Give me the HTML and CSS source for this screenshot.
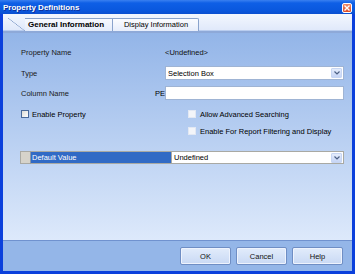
FILE: index.html
```html
<!DOCTYPE html>
<html>
<head>
<meta charset="utf-8">
<link rel="stylesheet" href="styles.css">
</head>
<body>
<div class="window">
  <div class="titlebar">
    <span class="title">Property Definitions</span>
    <span class="close"><svg width="6" height="6" viewBox="0 0 6 6"><path d="M0.5 0.5L5.5 5.5M5.5 0.5L0.5 5.5" stroke="#fff" stroke-width="1.4"/></svg></span>
  </div>
  <div class="frame">
    <div class="tabs">
      <div class="tab active"><span class="slant"></span><span class="tab-body">General Information</span></div>
      <div class="tab plain">Display Information</div>
    </div>
    <div class="panel">
      <div class="row r1"><span class="label">Property Name</span><span class="value">&lt;Undefined&gt;</span></div>
      <div class="row r2"><span class="label">Type</span><div class="select"><span class="sel-text">Selection Box</span><span class="arrow"><svg width="6" height="4" viewBox="0 0 6 4"><path d="M0.5 0.5L3 3L5.5 0.5" fill="none" stroke="#4d6185" stroke-width="1.2"/></svg></span></div></div>
      <div class="row r3"><span class="label short">Column Name</span><span class="prefix">PE</span><div class="input"></div></div>
      <div class="checks">
        <div class="check-left">
          <div class="check"><span class="box"></span><span>Enable Property</span></div>
        </div>
        <div class="check-right">
          <div class="check"><span class="box off"></span><span>Allow Advanced Searching</span></div>
          <div class="check"><span class="box off"></span><span>Enable For Report Filtering and Display</span></div>
        </div>
      </div>
      <div class="grid-row">
        <span class="cell-gray"></span>
        <span class="cell-sel">Default Value</span>
        <div class="select grid-select"><span class="sel-text">Undefined</span><span class="arrow"><svg width="6" height="4" viewBox="0 0 6 4"><path d="M0.5 0.5L3 3L5.5 0.5" fill="none" stroke="#4d6185" stroke-width="1.2"/></svg></span></div>
      </div>
    </div>
    <div class="footer">
      <button class="btn">OK</button>
      <button class="btn">Cancel</button>
      <button class="btn">Help</button>
    </div>
  </div>
</div>
</body>
</html>
```

FILE: styles.css
```css
html, body {
  margin: 0;
  padding: 0;
  background: #ffffff;
}
.window {
  width: 355px;
  height: 274px;
  box-sizing: border-box;
  background: #0b40dc;
  display: flex;
  flex-direction: column;
  font-family: "Liberation Sans", Arial, sans-serif;
  font-size: 7.5px;
  color: #000;
  overflow: hidden;
}
.titlebar {
  height: 14px;
  flex: 0 0 14px;
  background: linear-gradient(#3a80f0 0px, #0e5fe6 3px, #0a58de 10px, #0a4fd0 14px);
  display: flex;
  align-items: center;
  justify-content: space-between;
  padding: 0 3px 0 3px;
}
.title {
  color: #fff;
  font-weight: bold;
  font-size: 8px;
  text-shadow: 1px 1px 0 #0a2f9a;
  line-height: 14px;
  padding-top: 1px;
}
.close {
  width: 10px;
  height: 10px;
  margin-top: 2px;
  box-sizing: border-box;
  border: 1px solid #fff;
  border-radius: 2px;
  background: linear-gradient(#ef8a68, #dc4c28);
  display: flex;
  align-items: center;
  justify-content: center;
}
.close svg { display: block; }
.frame {
  flex: 1;
  margin: 0 3px 3px 3px;
  display: flex;
  flex-direction: column;
  min-height: 0;
}
.tabs {
  height: 17px;
  flex: 0 0 17px;
  background: linear-gradient(#f3f7fe, #dfe8fa);
  border-bottom: 2px solid #8ea9d8;
  box-shadow: inset 0 -1px 0 #b9cdef;
  display: flex;
  align-items: flex-end;
  padding-left: 5px;
}
.tab {
  height: 13px;
  box-sizing: border-box;
  font-size: 7.5px;
  line-height: 12px;
  display: flex;
}
.tab.active {
  font-weight: bold;
  font-size: 8px;
}
.slant {
  width: 17px;
  height: 13px;
  background: linear-gradient(to top right, transparent calc(50% - 0.6px), #8aa3cc 50%, transparent calc(50% + 0.6px));
}
.tab-body {
  width: 88px;
  box-sizing: border-box;
  border-top: 1px solid #8aa3cc;
  border-right: 1px solid #8aa3cc;
  background: linear-gradient(#f7f9fe, #e4ecfb);
  padding-left: 3px;
  line-height: 12px;
}
.tab.plain {
  width: 86px;
  border: 1px solid #8aa3cc;
  border-left: none;
  border-bottom: none;
  border-radius: 0 2px 0 0;
  background: linear-gradient(#fbfcff, #e6edfb);
  justify-content: center;
  padding-left: 1px;
}
.panel {
  flex: 1;
  background: linear-gradient(#93b5e8, #dde9fb);
  padding: 0 8px 0 18px;
  display: flex;
  flex-direction: column;
  border-bottom: 1px solid #7092cf;
}
.row {
  display: flex;
  align-items: center;
  height: 14px;
}
.r1 { margin-top: 12px; }
.r2 { margin-top: 7px; }
.r3 { margin-top: 6px; }
.label {
  flex: 0 0 144px;
  color: #1a1a1a;
}
.label.short { flex: 0 0 134px; }
.prefix { flex: 0 0 10px; }
.value { color: #111; }
.select, .input {
  flex: 1;
  height: 14px;
  box-sizing: border-box;
  background: #fff;
  border: 1px solid #9fb4d4;
  display: flex;
  align-items: center;
}
.sel-text {
  flex: 1;
  padding-left: 2px;
}
.arrow {
  width: 11px;
  height: 10px;
  margin-right: 1px;
  box-sizing: border-box;
  border: 1px solid #c7d6f3;
  border-radius: 1px;
  background: linear-gradient(#e4ecfc, #c6d5f6);
  display: flex;
  align-items: center;
  justify-content: center;
}
.arrow svg { display: block; }
.checks {
  display: flex;
  margin-top: 9px;
}
.check-left {
  flex: 0 0 167px;
}
.check-right {
  display: flex;
  flex-direction: column;
  gap: 8px;
}
.check {
  display: flex;
  align-items: center;
  height: 9px;
  gap: 4px;
}
.check span:last-child { padding-top: 1px; }
.check-left .check { gap: 3px; }
.box {
  width: 8px;
  height: 8px;
  box-sizing: border-box;
  border: 1px solid #4a6a9a;
  background: linear-gradient(135deg, #dcdcd6, #ffffff);
}
.box.off {
  border: 1px solid #e2e8f3;
  background: #f3f5f9;
}
.grid-row {
  display: flex;
  height: 13px;
  margin-top: 16px;
  margin-left: -1px;
}
.cell-gray {
  width: 10px;
  box-sizing: border-box;
  border: 1px solid #a9a9a3;
  border-right: none;
  background: #d6d3ca;
}
.cell-sel {
  width: 141px;
  box-sizing: border-box;
  border: 1px solid #a9a9a3;
  border-left: 1px solid #8a96a8;
  border-right: none;
  background: #316ac5;
  color: #fff;
  padding-left: 1px;
  line-height: 11px;
}
.grid-select {
  height: 13px;
  border-color: #a9a9a3;
}
.footer {
  height: 30px;
  flex: 0 0 30px;
  background: #94b6e8;
  display: flex;
  justify-content: flex-end;
  align-items: flex-start;
  gap: 5px;
  padding: 6px 9px 0 0;
  box-sizing: border-box;
}
.btn {
  width: 51px;
  height: 18px;
  margin: 0;
  padding: 0;
  box-sizing: border-box;
  border: 1px solid #6f8ec4;
  border-radius: 2px;
  background: linear-gradient(#e2ecfb, #c9d9f4);
  box-shadow: inset 0 0 0 1px #eef3fd;
  font-family: "Liberation Sans", Arial, sans-serif;
  font-size: 7.5px;
  color: #111;
}
```
